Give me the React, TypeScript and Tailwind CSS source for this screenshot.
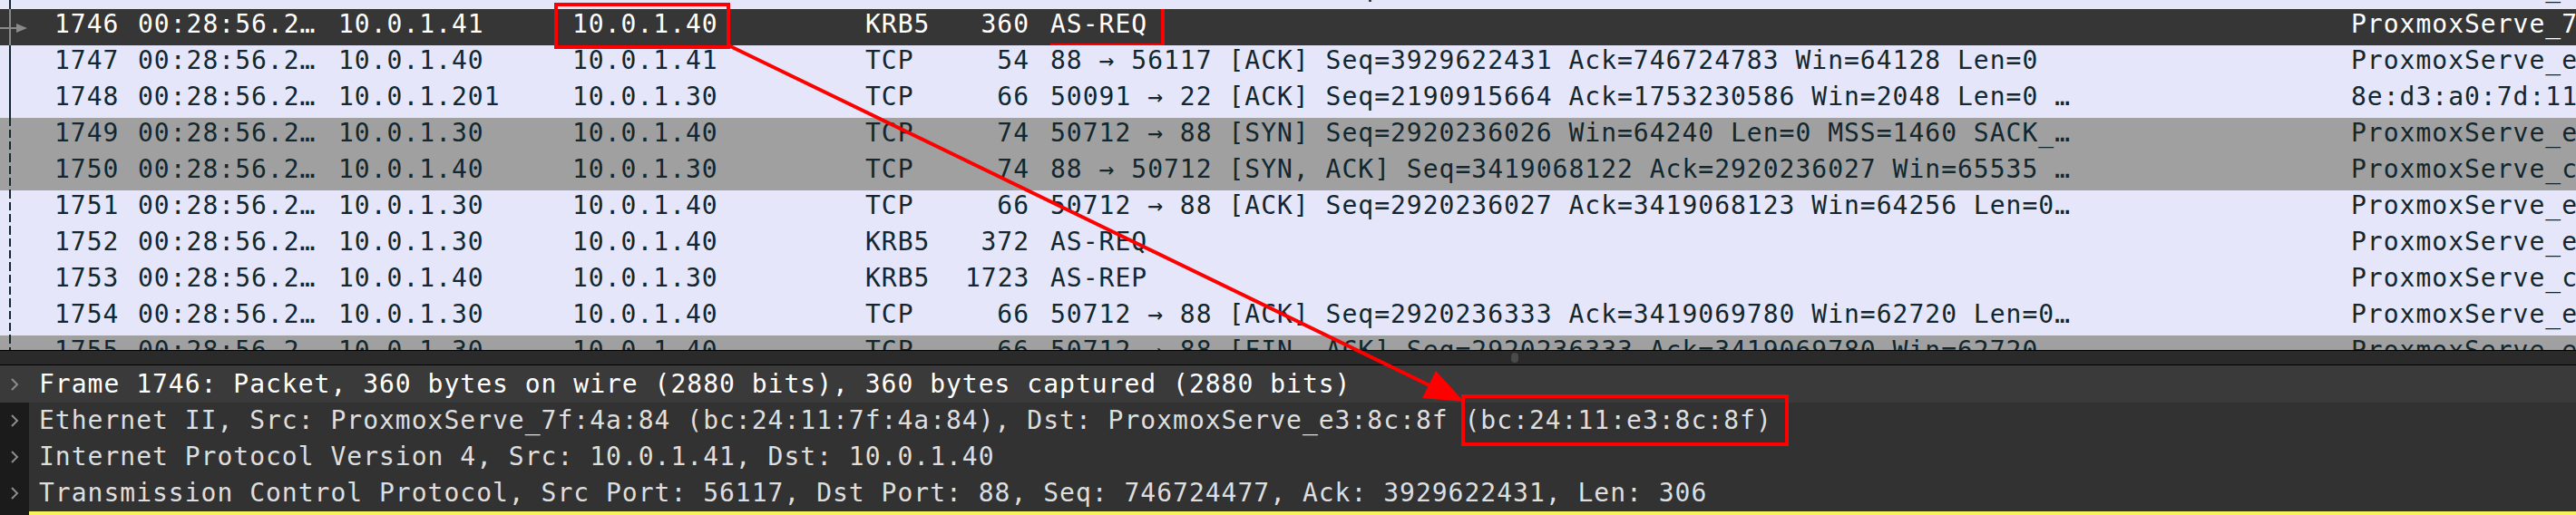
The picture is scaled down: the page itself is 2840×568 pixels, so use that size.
import React from 'react';

type Tone = 'light' | 'gray' | 'sel';
type Line = 'solid' | 'dashed' | 'arrow';

type Packet = {
  no: string;
  src: string;
  dst: string;
  proto: string;
  len: string;
  info: string;
  hw: string;
  tone: Tone;
  line: Line;
};

const packets: Packet[] = [
  { no: '1745', src: '10.0.1.41', dst: '10.0.1.40', proto: 'TCP', len: '54', info: '56117 → 88 [ACK] Seq=746724477 Ack=3929622431 Win=64256 Len=0', hw: 'ProxmoxServe_7f:4a:84', tone: 'light', line: 'solid' },
  { no: '1746', src: '10.0.1.41', dst: '10.0.1.40', proto: 'KRB5', len: '360', info: 'AS-REQ', hw: 'ProxmoxServe_7f:4a:84', tone: 'sel', line: 'arrow' },
  { no: '1747', src: '10.0.1.40', dst: '10.0.1.41', proto: 'TCP', len: '54', info: '88 → 56117 [ACK] Seq=3929622431 Ack=746724783 Win=64128 Len=0', hw: 'ProxmoxServe_e3:8c:8f', tone: 'light', line: 'solid' },
  { no: '1748', src: '10.0.1.201', dst: '10.0.1.30', proto: 'TCP', len: '66', info: '50091 → 22 [ACK] Seq=2190915664 Ack=1753230586 Win=2048 Len=0 …', hw: '8e:d3:a0:7d:11:64', tone: 'light', line: 'solid' },
  { no: '1749', src: '10.0.1.30', dst: '10.0.1.40', proto: 'TCP', len: '74', info: '50712 → 88 [SYN] Seq=2920236026 Win=64240 Len=0 MSS=1460 SACK_…', hw: 'ProxmoxServe_e3:8c:8f', tone: 'gray', line: 'dashed' },
  { no: '1750', src: '10.0.1.40', dst: '10.0.1.30', proto: 'TCP', len: '74', info: '88 → 50712 [SYN, ACK] Seq=3419068122 Ack=2920236027 Win=65535 …', hw: 'ProxmoxServe_c2:1a:5b', tone: 'gray', line: 'dashed' },
  { no: '1751', src: '10.0.1.30', dst: '10.0.1.40', proto: 'TCP', len: '66', info: '50712 → 88 [ACK] Seq=2920236027 Ack=3419068123 Win=64256 Len=0…', hw: 'ProxmoxServe_e3:8c:8f', tone: 'light', line: 'dashed' },
  { no: '1752', src: '10.0.1.30', dst: '10.0.1.40', proto: 'KRB5', len: '372', info: 'AS-REQ', hw: 'ProxmoxServe_e3:8c:8f', tone: 'light', line: 'dashed' },
  { no: '1753', src: '10.0.1.40', dst: '10.0.1.30', proto: 'KRB5', len: '1723', info: 'AS-REP', hw: 'ProxmoxServe_c2:1a:5b', tone: 'light', line: 'dashed' },
  { no: '1754', src: '10.0.1.30', dst: '10.0.1.40', proto: 'TCP', len: '66', info: '50712 → 88 [ACK] Seq=2920236333 Ack=3419069780 Win=62720 Len=0…', hw: 'ProxmoxServe_e3:8c:8f', tone: 'light', line: 'dashed' },
  { no: '1755', src: '10.0.1.30', dst: '10.0.1.40', proto: 'TCP', len: '66', info: '50712 → 88 [FIN, ACK] Seq=2920236333 Ack=3419069780 Win=62720 …', hw: 'ProxmoxServe_e3:8c:8f', tone: 'gray', line: 'dashed' },
];

const details = [
  'Frame 1746: Packet, 360 bytes on wire (2880 bits), 360 bytes captured (2880 bits)',
  'Ethernet II, Src: ProxmoxServe_7f:4a:84 (bc:24:11:7f:4a:84), Dst: ProxmoxServe_e3:8c:8f ',
  'Internet Protocol Version 4, Src: 10.0.1.41, Dst: 10.0.1.40',
  'Transmission Control Protocol, Src Port: 56117, Dst Port: 88, Seq: 746724477, Ack: 3929622431, Len: 306',
];

function Indicator({ line }: { line: Line }) {
  if (line === 'arrow') {
    return (
      <svg width="60" height="40" className="shrink-0">
        <line x1="11" y1="0" x2="11" y2="40" stroke="#8a8a8a" strokeWidth="2" />
        <line x1="0" y1="21" x2="19" y2="21" stroke="#8a8a8a" strokeWidth="2" />
        <polygon points="18,16 30,21 18,26" fill="#8a8a8a" />
      </svg>
    );
  }
  return (
    <svg width="60" height="40" className="shrink-0">
      <line
        x1="11"
        y1="0"
        x2="11"
        y2="40"
        stroke="#12272e"
        strokeWidth="2"
        strokeDasharray={line === 'dashed' ? '9 4' : undefined}
      />
    </svg>
  );
}

function PacketRow({ p }: { p: Packet }) {
  const toneClass =
    p.tone === 'sel'
      ? 'bg-[#363636] text-white'
      : p.tone === 'gray'
        ? 'bg-[#a0a0a0] text-[#12272e]'
        : 'bg-[#e6e6fa] text-[#12272e]';
  const isSel = p.tone === 'sel';

  return (
    <div className={`flex h-10 shrink-0 whitespace-nowrap leading-[34px] ${toneClass}`}>
      <Indicator line={p.line} />
      <div className="w-[92px] shrink-0">{p.no}</div>
      <div className="w-[221px] shrink-0">00:28:56.2…</div>
      <div className="w-[258px] shrink-0">{p.src}</div>
      <div className="w-[323px] shrink-0">
        <span className="relative inline-block">
          {p.dst}
          {isSel && <span className="absolute -top-[7px] -bottom-[10px] -left-[20px] -right-[13px] border-4 border-[#f00]" />}
        </span>
      </div>
      <div className="w-[110px] shrink-0">{p.proto}</div>
      <div className="w-[71px] shrink-0 text-right">{p.len}</div>
      <div className="w-[23px] shrink-0" />
      <div className="w-[1434px] shrink-0 overflow-hidden">
        <span className="relative inline-block">
          {p.info}
          {isSel && <span className="absolute -top-[4px] -bottom-[8px] -left-[16px] -right-[19px] border-4 border-[#f00]" />}
        </span>
      </div>
      <div className="shrink-0">{p.hw}</div>
    </div>
  );
}

function Chevron() {
  return (
    <svg width="10" height="16" viewBox="0 0 10 16">
      <polyline points="2,2 8,8 2,14" fill="none" stroke="#8c8c8c" strokeWidth="2" />
    </svg>
  );
}

export default function App() {
  return (
    <div className="relative h-[568px] w-[2840px] overflow-hidden bg-[#323232] font-['DejaVu_Sans_Mono',monospace] text-[28px] tracking-[1px]">
      {/* packet list */}
      <div className="flex h-[386px] flex-col overflow-hidden bg-[#e6e6fa]">
        <div className="-mt-[30px] flex flex-col">
          {packets.map((p) => (
            <PacketRow key={p.no} p={p} />
          ))}
        </div>
      </div>

      {/* splitter */}
      <div className="flex h-[17px] items-center border-y border-black bg-[#2a2a2a] pl-[1666px]">
        <div className="h-[11px] w-[8px] rounded-full bg-[#4a4a4a]" />
      </div>

      {/* packet details */}
      <div className="flex flex-col">
        <div className="flex h-[41px] bg-[#3a3a3a] leading-[41px] text-white">
          <div className="flex w-[32px] shrink-0 items-center justify-center">
            <Chevron />
          </div>
          <div className="whitespace-nowrap pl-[11px]">{details[0]}</div>
        </div>
        {details.slice(1).map((d, i) => (
          <div key={d} className="flex h-10 leading-10 text-[#dedede]">
            <div className="flex w-[32px] shrink-0 items-center justify-center bg-[#1b1b1b]">
              <Chevron />
            </div>
            <div className="flex-1 whitespace-nowrap bg-[#323232] pl-[11px]">
              {d}
              {i === 0 && (
                <span className="relative inline-block">
                  (bc:24:11:e3:8c:8f)
                  <span className="absolute -top-[9px] -bottom-[8px] -left-[3px] -right-[18px] border-4 border-[#f00]" />
                </span>
              )}
            </div>
          </div>
        ))}
        <div className="flex h-[4px]">
          <div className="w-[32px] shrink-0 bg-[#1b1b1b]" />
          <div className="flex-1 bg-[#f7f35a]" />
        </div>
      </div>

      {/* annotation arrow */}
      <svg className="pointer-events-none absolute left-0 top-0" width="2840" height="568">
        <line x1="803" y1="50" x2="1578" y2="426" stroke="#f00" strokeWidth="4" />
        <polygon points="1614,443 1568,439 1583,409" fill="#f00" />
      </svg>
    </div>
  );
}
